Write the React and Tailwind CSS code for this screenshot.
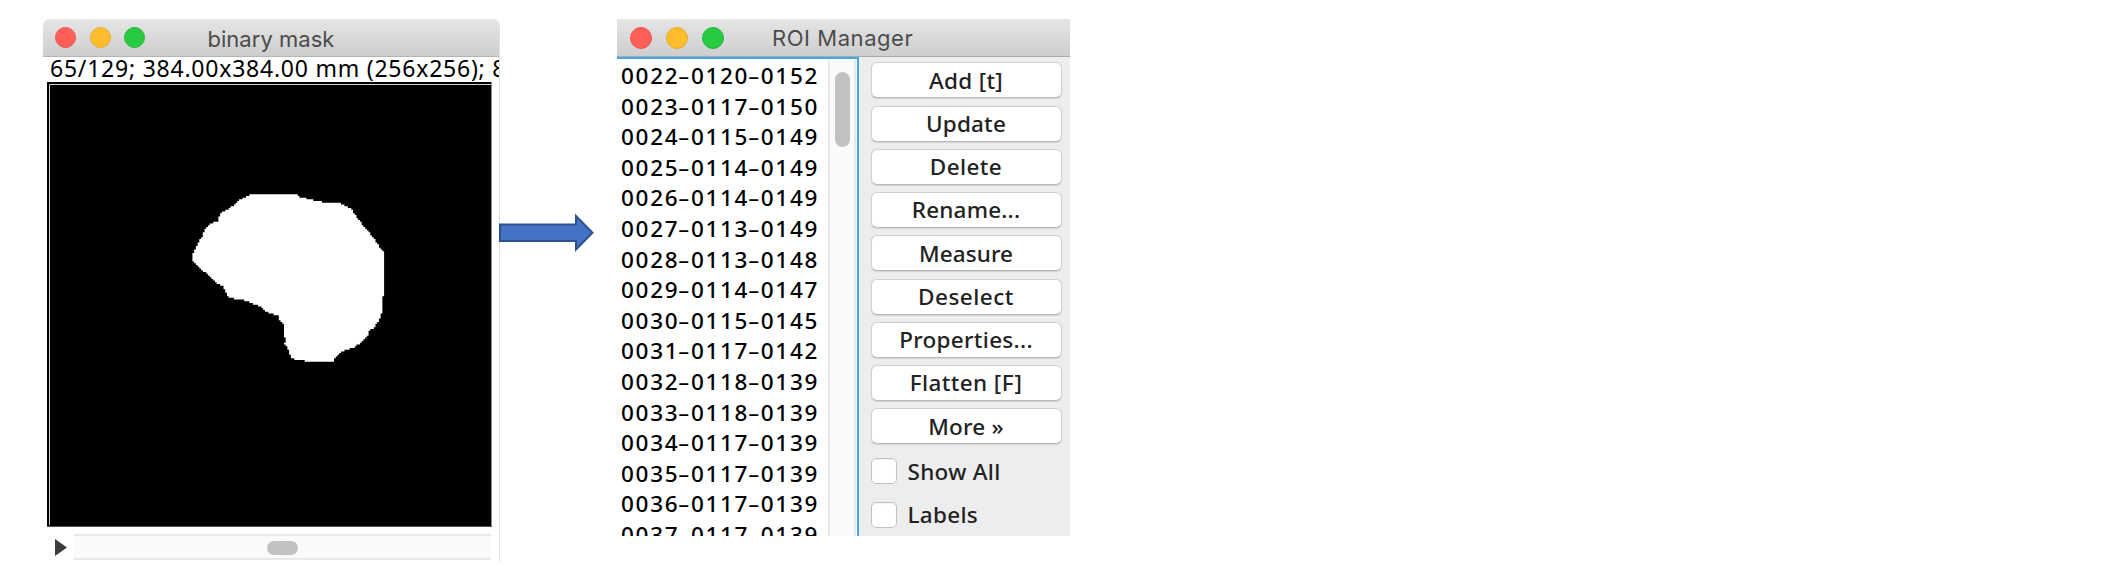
import React from "react";

const rois = [
  "0022-0120-0152", "0023-0117-0150", "0024-0115-0149", "0025-0114-0149",
  "0026-0114-0149", "0027-0113-0149", "0028-0113-0148", "0029-0114-0147",
  "0030-0115-0145", "0031-0117-0142", "0032-0118-0139", "0033-0118-0139",
  "0034-0117-0139", "0035-0117-0139", "0036-0117-0139", "0037-0117-0139",
];

const actions = [
  ["Add [t]", "tracking-[0.3px]"],
  ["Update", "tracking-[0.2px]"],
  ["Delete", "tracking-[0.4px]"],
  ["Rename...", "tracking-[0.2px]"],
  ["Measure", "tracking-[0.1px]"],
  ["Deselect", "tracking-[0.5px]"],
  ["Properties...", "tracking-[0.3px]"],
  ["Flatten [F]", "tracking-[0.4px]"],
  ["More »", "tracking-[0.2px]"],
];

// Outline of the segmented region, three units per pixel.
const outline = [
  [240, 75], [384, 75], [388, 81], [418, 87], [442, 94], [476, 98], [514, 101], [545, 118],
  [560, 140], [577, 164], [600, 190], [617, 213], [638, 243], [644, 252], [644, 373], [638, 378],
  [637, 420], [629, 449], [612, 473], [598, 483], [595, 494], [566, 523], [548, 535], [530, 538],
  [512, 547], [496, 563], [491, 572], [476, 577], [417, 577], [413, 573], [386, 571], [363, 565],
  [358, 548], [350, 530], [344, 521], [347, 508], [343, 500], [343, 464], [329, 450], [327, 438],
  [308, 431], [291, 426], [276, 411], [256, 404], [236, 394], [208, 388], [178, 384], [170, 369],
  [158, 346], [141, 342], [105, 307], [87, 292], [69, 275], [69, 251], [77, 237], [89, 210],
  [99, 196], [101, 185], [119, 160], [144, 154], [152, 128], [180, 114], [205, 93], [221, 82],
];

// Rasterises the outline on the 256-cell grid of the image.
const CELL = 5.18;
function maskPath() {
  let d = "";
  for (let r = 12; r < 114; r++) {
    const y = (r + 0.5) * CELL;
    const xs = [];
    outline.forEach(([x1, y1], i) => {
      const [x2, y2] = outline[(i + 1) % outline.length];
      if (y1 <= y !== y2 <= y) xs.push(x1 + ((y - y1) / (y2 - y1)) * (x2 - x1));
    });
    xs.sort((a, b) => a - b);
    for (let i = 0; i + 1 < xs.length; i += 2) {
      const a = Math.round(xs[i] / CELL) * CELL;
      const b = Math.round(xs[i + 1] / CELL) * CELL;
      d += `M${a} ${r * CELL}H${b}V${(r + 1) * CELL + 0.3}H${a}Z`;
    }
  }
  return d;
}

function Light({ className }) {
  return <span className={"shrink-0 rounded-full border " + className} />;
}

function RoiRow({ name }) {
  const parts = name.split("-");
  return (
    <li className="h-[30.6px] whitespace-nowrap">
      {parts.map((p, i) => (
        <React.Fragment key={i}>
          {i > 0 && <span className="inline-block w-[11.6px] origin-center -translate-x-px scale-x-[1.65] text-center font-normal tracking-normal">-</span>}
          {p}
        </React.Fragment>
      ))}
    </li>
  );
}

function MaskWindow() {
  return (
    <section className="flex h-[543px] w-[457px] shrink-0 flex-col overflow-hidden rounded-t-[7px] border-r border-[#e2e2e2] bg-white">
      <header className="grid h-[38px] shrink-0 grid-cols-[164.5px_1fr] items-center border-b border-[#b4b4b4] bg-linear-to-b from-[#e5e5e5] to-[#cecece]">
        <div className="flex gap-[13.5px] pl-3">
          <Light className="size-[21px] border-[#ee5350] bg-[#ff5f58]" />
          <Light className="size-[21px] border-[#e9ad2c] bg-[#ffbd2e]" />
          <Light className="size-[21px] border-[#22b93a] bg-[#28ca41]" />
        </div>
        <h1 className="whitespace-nowrap pt-[2px] text-[22px] leading-none tracking-[0.02px] text-[#4c4c4c] [font-family:Inter,sans-serif]">binary mask</h1>
      </header>
      <div className="h-[25px] shrink-0 overflow-hidden whitespace-nowrap pl-[7px] text-[23px] leading-[23px] tracking-[0.77px] text-black">
        65/129; 384.00x384.00 mm (256x256); 8
      </div>
      <svg className="ml-1 h-[445px] w-[445px] shrink-0" viewBox="0 0 445 445">
        <rect width="445" height="445" fill="#000" />
        <path d="M2.5 443V2.5H444" fill="none" stroke="#d0d0d0" />
        <path d="M444.5 0V445" fill="none" stroke="#8c8c8c" />
        <path d="M0 444.5H445" fill="none" stroke="#555" />
        <path transform="translate(123 88) scale(0.33333)" d={maskPath()} fill="#fff" />
      </svg>
      <div className="mt-[7px] flex h-[26px] items-center pl-3">
        <svg className="h-[17px] w-3 shrink-0" viewBox="0 0 12 17">
          <path d="M0 0L12 8.5L0 17Z" fill="#3d3d3d" />
        </svg>
        <div className="ml-[7px] flex h-[26px] w-[417px] items-center border-y-2 border-[#e9e9e9] bg-[#fafafa] pl-[193px] pt-px">
          <span className="h-[14px] w-[31px] rounded-full bg-[#c2c2c2]" />
        </div>
      </div>
    </section>
  );
}

function RoiManager() {
  return (
    <section className="flex h-[517px] w-[453px] shrink-0 flex-col overflow-hidden bg-[#ededed]">
      <header className="grid h-[38px] shrink-0 grid-cols-[155px_1fr] items-center border-b border-[#aaa] bg-linear-to-b from-[#e5e5e5] to-[#cecece]">
        <div className="flex gap-[14px] pl-[13px]">
          <Light className="size-[22px] border-[#ee5350] bg-[#ff5f58]" />
          <Light className="size-[22px] border-[#e9ad2c] bg-[#ffbd2e]" />
          <Light className="size-[22px] border-[#22b93a] bg-[#28ca41]" />
        </div>
        <h1 className="whitespace-nowrap text-[22px] leading-none tracking-[0.55px] text-[#4c4c4c] [font-family:Inter,sans-serif]">ROI Manager</h1>
      </header>
      <div className="flex min-h-0 flex-1">
        <div className="flex w-[242px] overflow-hidden border-r-2 border-t-2 border-[#3fa9ea] bg-white">
          <ul className="w-[211px] pl-[4px] pt-[2px] text-[22.5px] font-medium leading-[30.6px] tracking-[1.7px] text-black">
            {rois.map((r) => <RoiRow key={r} name={r} />)}
          </ul>
          <div className="mt-px w-[28px] border-x-2 border-[#e8e8e8] bg-[#fafafa] pl-[5px] pt-3">
            <div className="h-[75px] w-[15px] rounded-full bg-[#c1c1c1]" />
          </div>
        </div>
        <div className="flex-1 pl-[11.5px] pr-[8.5px] pt-[5.3px] font-medium text-[#222]">
          <div className="grid auto-rows-[36px] gap-[7.25px]">
            {actions.map(([label, spacing]) => (
              <button key={label} className={"rounded-[6px] border border-[#d0d0d0] border-b-[#b9b9b9] bg-white pt-px text-[22.5px] leading-none whitespace-nowrap shadow-[0_1px_1px_rgba(0,0,0,0.12)] " + spacing}>
                {label}
              </button>
            ))}
          </div>
          <div className="mt-[14px] grid gap-[17.5px]">
            {["Show All", "Labels"].map((label) => (
              <label key={label} className="flex h-[26px] items-center gap-[11px] text-[22.5px] leading-none tracking-[0.3px]">
                <span className="size-[26px] rounded-[5px] border border-[#c2c2c2] bg-white shadow-[inset_0_1px_1px_rgba(0,0,0,0.06)]" />
                <span className="pt-px">{label}</span>
              </label>
            ))}
          </div>
        </div>
      </div>
    </section>
  );
}

export default function App() {
  return (
    <main className="flex h-[577px] w-[2125px] items-start overflow-hidden bg-white pl-[43px] pt-[19px] [font-family:'Noto_Sans',sans-serif]">
      <MaskWindow />
      <svg className="-ml-px mt-[194px] h-[40px] w-[118px] shrink-0" viewBox="0 0 118 40">
        <path d="M1 11.5H77V3L93.5 19.8L77 36.5V28H1Z" fill="#4472c4" stroke="#2f528f" strokeWidth="2" />
      </svg>
      <RoiManager />
    </main>
  );
}
